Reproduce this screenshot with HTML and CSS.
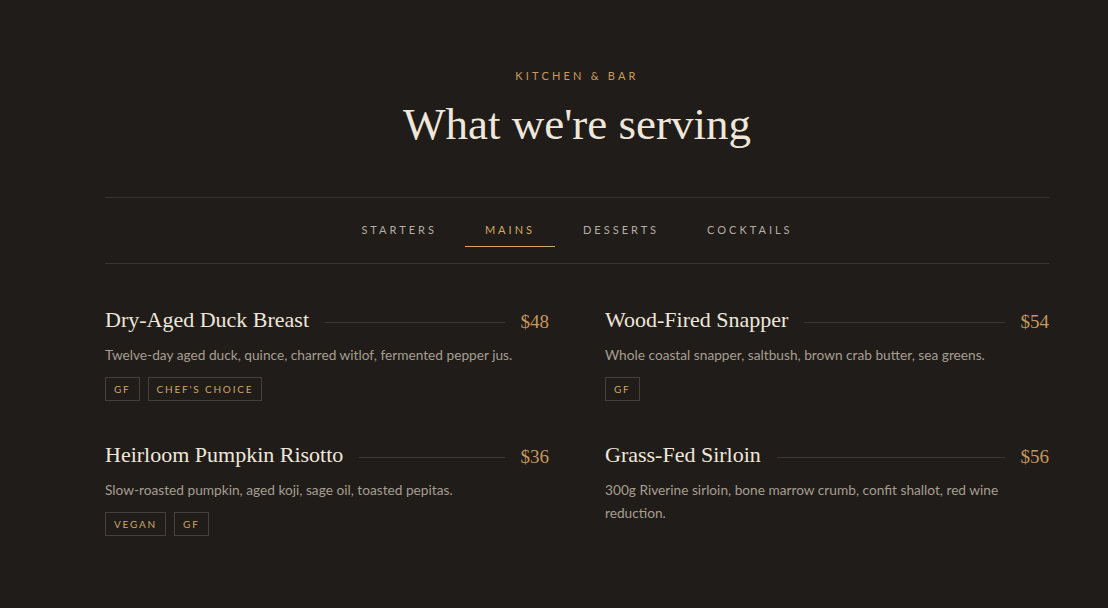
FILE: index.html
```html
<!doctype html>
<html lang="en">
  <head>
    <meta charset="utf-8">
    <title>Menu - What we're serving</title>
    <link rel="stylesheet" href="styles.css">
  </head>
  <body>
    <section class="menu">
      <header class="menuHead">
        <p class="eyebrow">Kitchen &amp; Bar</p>
        <h1 class="title">What we're serving</h1>
      </header>

      <nav class="tabs">
        <a class="tab">Starters</a>
        <a class="tab active">Mains</a>
        <a class="tab">Desserts</a>
        <a class="tab">Cocktails</a>
      </nav>

      <div class="dishes">
        <article class="dish">
          <div class="dishRow">
            <h3 class="dishName">Dry-Aged Duck Breast</h3>
            <span class="leader"></span>
            <span class="price">$48</span>
          </div>
          <p class="desc">Twelve-day aged duck, quince, charred witlof, fermented pepper jus.</p>
          <div class="tags">
            <span class="tag">GF</span>
            <span class="tag">Chef's Choice</span>
          </div>
        </article>

        <article class="dish">
          <div class="dishRow">
            <h3 class="dishName">Wood-Fired Snapper</h3>
            <span class="leader"></span>
            <span class="price">$54</span>
          </div>
          <p class="desc">Whole coastal snapper, saltbush, brown crab butter, sea greens.</p>
          <div class="tags">
            <span class="tag">GF</span>
          </div>
        </article>

        <article class="dish">
          <div class="dishRow">
            <h3 class="dishName">Heirloom Pumpkin Risotto</h3>
            <span class="leader"></span>
            <span class="price">$36</span>
          </div>
          <p class="desc">Slow-roasted pumpkin, aged koji, sage oil, toasted pepitas.</p>
          <div class="tags">
            <span class="tag">Vegan</span>
            <span class="tag">GF</span>
          </div>
        </article>

        <article class="dish">
          <div class="dishRow">
            <h3 class="dishName">Grass-Fed Sirloin</h3>
            <span class="leader"></span>
            <span class="price">$56</span>
          </div>
          <p class="desc">300g Riverine sirloin, bone marrow crumb, confit shallot, red wine reduction.</p>
        </article>
      </div>
    </section>
  </body>
</html>
```

FILE: styles.css
```css
html,
body {
  margin: 0;
  background-color: #201c19;
}

body {
  font-family: "Lato", "Noto Sans", sans-serif;
  color: #a69e91;
}

.menu {
  width: 944px;
  margin-left: 105px;
  padding-top: 68px;
}

.menuHead {
  text-align: center;
}

.eyebrow {
  margin: 0;
  font-size: 11px;
  line-height: 16px;
  letter-spacing: 3.2px;
  text-transform: uppercase;
  color: #c99b5c;
}

.title {
  margin: 12px 0 0;
  font-family: "Liberation Serif", serif;
  font-weight: normal;
  font-size: 45px;
  line-height: 56px;
  color: #efe7da;
}

.tabs {
  display: flex;
  justify-content: center;
  gap: 8px;
  margin-top: 45px;
  padding: 16px 0;
  border-top: 1px solid #3a3430;
  border-bottom: 1px solid #3a3430;
}

.tab {
  padding: 9px 20px;
  font-size: 11px;
  line-height: 14px;
  letter-spacing: 3px;
  text-transform: uppercase;
  color: #b4ada2;
  border-bottom: 1px solid transparent;
  cursor: pointer;
}

.tab.active {
  color: #d2aa62;
  border-bottom-color: #d2aa62;
}

.dishes {
  display: grid;
  grid-template-columns: 1fr 1fr;
  column-gap: 56px;
  row-gap: 36px;
  padding-top: 38px;
}

.dishRow {
  display: flex;
  align-items: center;
  gap: 16px;
}

.dishName {
  margin: 0;
  font-family: "Liberation Serif", serif;
  font-weight: normal;
  font-size: 22px;
  line-height: 29px;
  color: #efe7da;
  white-space: nowrap;
}

.leader {
  flex: 1;
  height: 1px;
  margin-top: 7px;
  background-color: #3d3733;
}

.price {
  font-family: "Liberation Serif", serif;
  font-size: 19px;
  line-height: 29px;
  margin-top: 5px;
  color: #c6975b;
}

.desc {
  margin: 7px 0 0;
  font-size: 13.7px;
  line-height: 23px;
  color: #a69e91;
}

.tags {
  display: flex;
  gap: 8px;
  margin-top: 11px;
}

.tag {
  padding: 0 8px;
  font-size: 10px;
  line-height: 22px;
  letter-spacing: 1.8px;
  text-transform: uppercase;
  color: #cfa761;
  border: 1px solid #45403a;
}
```
